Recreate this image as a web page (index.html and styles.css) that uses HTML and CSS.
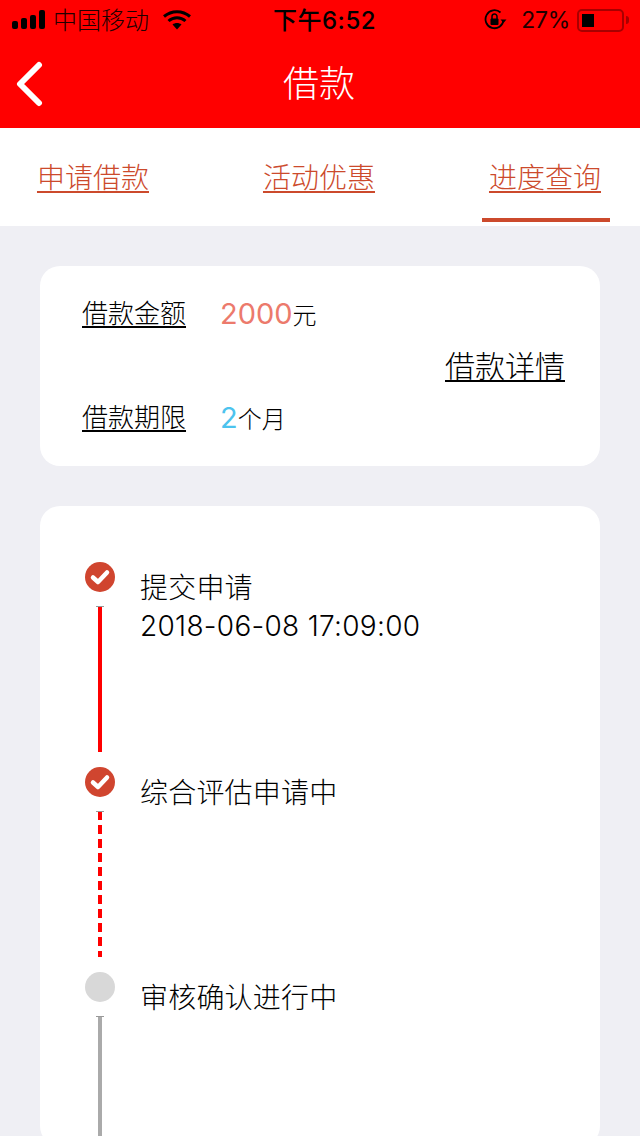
FILE: index.html
```html
<!DOCTYPE html>
<html lang="zh">
<head>
<meta charset="utf-8">
<title>借款</title>
<link rel="stylesheet" href="styles.css">
</head>
<body>
<header class="top">
  <div class="status">
    <div class="status-left">
      <svg class="signal" width="34" height="20" viewBox="0 0 34 20"><rect x="0" y="11" width="6" height="8" rx="2"/><rect x="9" y="8" width="6" height="11" rx="2"/><rect x="18" y="5" width="6" height="14" rx="2"/><rect x="27" y="0" width="6" height="19" rx="2"/></svg>
      <span class="carrier">中国移动</span>
      <svg class="wifi" width="28" height="20" viewBox="0 0 28 20"><path d="M1 6.500C8.500 0 19.500 0 27 6.500" fill="none" stroke="#000" stroke-width="3"/><path d="M5.500 11C10.500 6.500 17.500 6.500 22.500 11" fill="none" stroke="#000" stroke-width="3"/><path d="M9.500 14.500C12 12.500 16 12.500 18.500 14.500L14 19.500Z"/></svg>
    </div>
    <div class="clock">下午6:52</div>
    <div class="status-right">
      <svg class="lock" width="23" height="22" viewBox="0 0 23 22"><path d="M19.500 11A9 9 0 1 1 16.500 3.500" fill="none" stroke="#000" stroke-width="1.800"/><path d="M16.500 10.500h6l-3 3.500z"/><rect x="6.500" y="9.500" width="8" height="6.500" rx="1"/><path d="M8 10V7.500a2.500 2.500 0 0 1 5 0V10" fill="none" stroke="#000" stroke-width="1.500"/></svg>
      <span class="percent">27%</span>
      <div class="battery"><div class="battery-fill"></div></div>
      <div class="battery-tip"></div>
    </div>
  </div>
  <div class="navbar">
    <svg class="back" width="30" height="46" viewBox="0 0 30 46"><path d="M24 4L5 23L24 42" fill="none" stroke="#fff" stroke-width="6" stroke-linecap="round" stroke-linejoin="round"/></svg>
    <h1 class="title">借款</h1>
  </div>
</header>
<nav class="tabs">
  <a class="tab">申请借款</a>
  <a class="tab">活动优惠</a>
  <a class="tab tab-active">进度查询</a>
</nav>
<main class="content">
  <section class="card summary">
    <div class="summary-row">
      <span class="label">借款金额</span>
      <span class="value"><span class="num num-red">2000</span>元</span>
    </div>
    <div class="detail-row"><a class="detail">借款详情</a></div>
    <div class="summary-row">
      <span class="label">借款期限</span>
      <span class="value"><span class="num num-blue">2</span>个月</span>
    </div>
  </section>
  <section class="card steps">
    <div class="step">
      <div class="rail">
        <svg class="dot" width="30" height="30" viewBox="0 0 30 30"><circle cx="15" cy="15" r="15" fill="#d0452f"/><path d="M8 15.500L13 20L22 10.500" fill="none" stroke="#fff" stroke-width="4.500" stroke-linecap="round" stroke-linejoin="round"/></svg>
        <div class="line line-solid"></div>
      </div>
      <div class="step-text"><p>提交申请</p><p class="date">2018-06-08 17:09:00</p></div>
    </div>
    <div class="step">
      <div class="rail">
        <svg class="dot" width="30" height="30" viewBox="0 0 30 30"><circle cx="15" cy="15" r="15" fill="#d0452f"/><path d="M8 15.500L13 20L22 10.500" fill="none" stroke="#fff" stroke-width="4.500" stroke-linecap="round" stroke-linejoin="round"/></svg>
        <div class="line line-dashed"></div>
      </div>
      <div class="step-text"><p>综合评估申请中</p></div>
    </div>
    <div class="step">
      <div class="rail">
        <div class="dot dot-grey"></div>
        <div class="line line-grey"></div>
      </div>
      <div class="step-text"><p>审核确认进行中</p></div>
    </div>
  </section>
</main>
</body>
</html>
```
FILE: styles.css
```css
* { box-sizing: border-box; }
html, body { margin: 0; padding: 0; height: 1136px; overflow: hidden; }
body { background: #efeff4; font-family: "Noto Sans CJK SC", "Noto Sans", sans-serif; font-weight: 300; color: #000; }
p, h1 { margin: 0; font-weight: 300; }

.top { background: #ff0000; height: 128px; }
.status { height: 40px; display: flex; justify-content: space-between; align-items: center; padding: 0 11px 0 12px; position: relative; }
.status-left { display: flex; align-items: center; }
.carrier { font-size: 24px; line-height: 40px; color: #200000; margin: -2px 0 0 7px; }
.wifi { margin-left: 14px; }
.clock { position: absolute; left: 273px; top: 1px; line-height: 40px; font-size: 24px; font-weight: 500; letter-spacing: 0.5px; font-family: Inter, "Noto Sans CJK SC", sans-serif; }
.status-right { display: flex; align-items: center; }
.lock { margin-right: 14px; }
.percent { font-size: 23px; line-height: 40px; margin: 0 7px 0 0; font-family: Inter, sans-serif; font-weight: 400; color: #200000; letter-spacing: -0.3px; }
.battery { width: 47px; height: 23px; border: 2px solid #a80000; border-radius: 5px; padding: 3px; }
.battery-fill { width: 12px; height: 13px; background: #000; }
.battery-tip { width: 3px; height: 8px; background: #a80000; border-radius: 0 3px 3px 0; margin-left: 2px; }

.navbar { height: 88px; display: flex; align-items: center; justify-content: center; position: relative; }
.back { position: absolute; left: 15px; top: 21px; }
.title { color: #fff; font-size: 36px; line-height: 82px; height: 88px; padding-right: 2px; }

.tabs { height: 98px; background: #fff; display: flex; justify-content: space-between; padding: 0 30px; }
.tab { width: 128px; height: 94px; padding-right: 2px; text-align: center; font-size: 28px; line-height: 96px; color: #cc4a2c; text-decoration: underline; text-decoration-thickness: 2px; text-underline-offset: 3px; }
.tab-active { border-bottom: 4px solid #cc4a2c; }

.content { padding: 40px 40px 0; display: flex; flex-direction: column; gap: 40px; }
.card { background: #fff; border-radius: 20px; }
.summary { height: 200px; padding: 24px 35px 0 42px; }
.summary-row { display: flex; align-items: center; height: 46px; }
.label { width: 138px; font-size: 26px; margin-top: -3px; text-decoration: underline; text-decoration-thickness: 2px; text-underline-offset: 3px; }
.value { font-size: 24px; }
.num { font-family: Inter, sans-serif; font-size: 29px; font-weight: 400; }
.num-red { color: #ec7a6c; }
.num-blue { color: #4cc3ee; }
.detail-row { display: flex; justify-content: flex-end; height: 58px; line-height: 56px; }
.detail { font-size: 30px; text-decoration: underline; text-decoration-thickness: 2px; text-underline-offset: 3px; }

.steps { padding: 56px 45px 0; height: 640px; }
.step { display: flex; gap: 26px; height: 205px; }
.rail { width: 30px; display: flex; flex-direction: column; align-items: center; }
.dot { width: 30px; height: 30px; display: block; flex: none; }
.dot-grey { background: #d8d8d8; border-radius: 50%; }
.line { width: 4px; height: 146px; margin-top: 14px; position: relative; }
.line::before { content: ""; position: absolute; left: -2px; right: -2px; top: 0; height: 1px; background: #999; }
.line-solid { background: #f00; }
.line-dashed { background: repeating-linear-gradient(to bottom, #f00 0 9px, transparent 9px 14px); }
.line-grey { background: #aaa; }
.step-text { font-size: 28px; line-height: 40px; padding-top: 4px; margin-left: -1px; letter-spacing: 0.2px; }
.date { font-family: Inter, sans-serif; font-size: 28px; letter-spacing: 0.3px; }
```
